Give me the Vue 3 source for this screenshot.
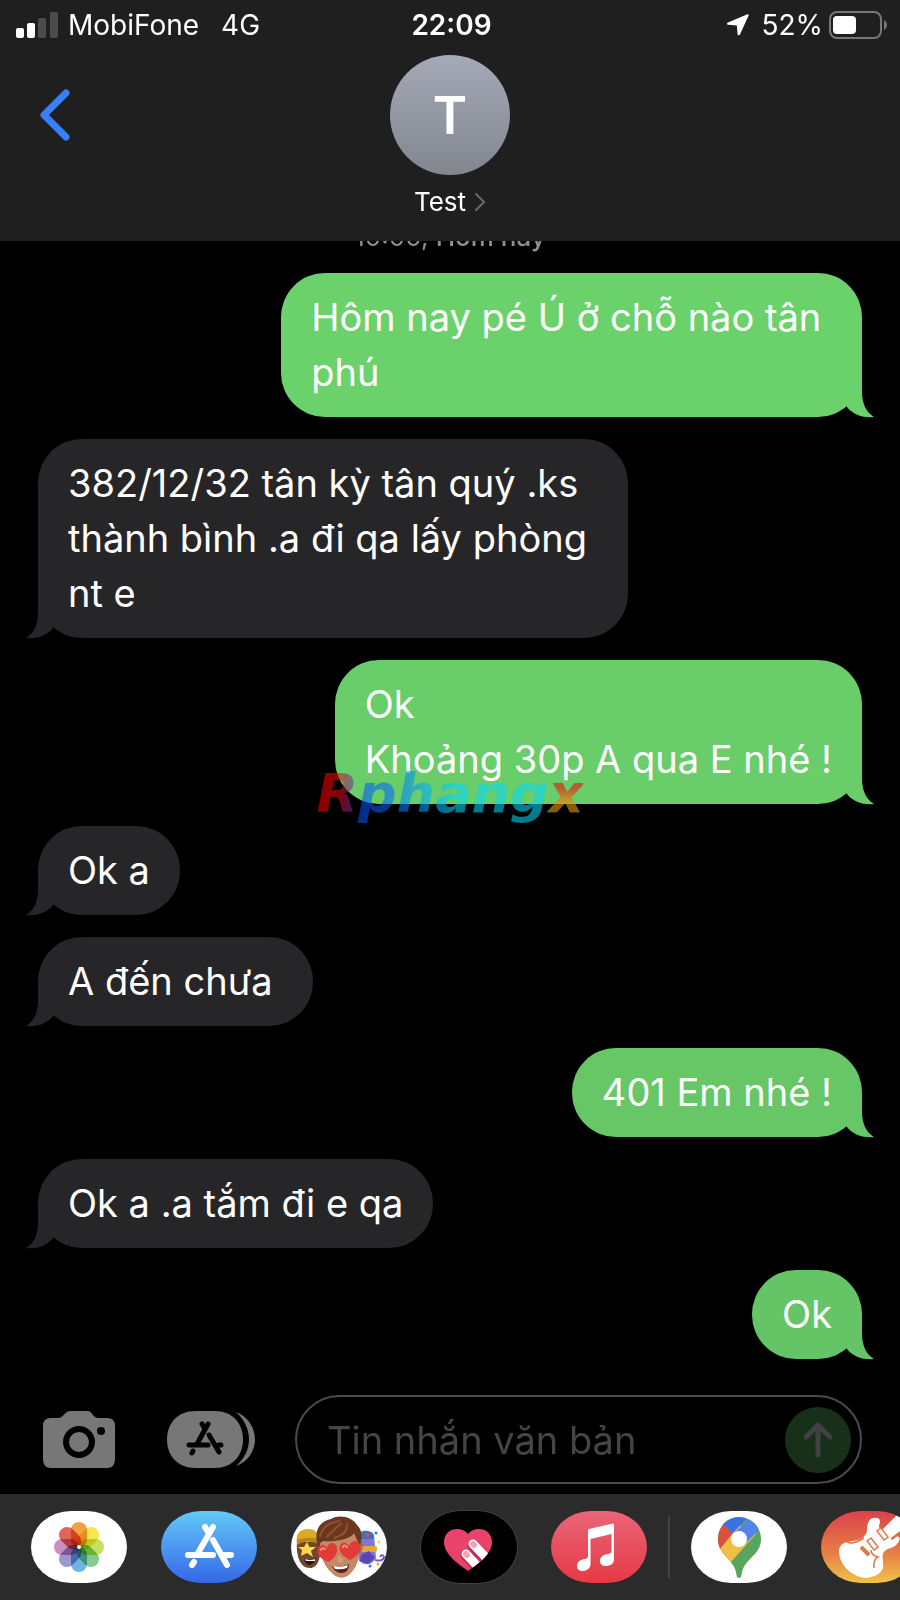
<template>
  <div class="phone">
    <header class="header">
      <div class="status">
        <div class="status-left">
          <svg class="signal" viewBox="0 0 42 26" aria-hidden="true">
            <rect x="0" y="16" width="8" height="10" rx="2" fill="#fff" />
            <rect x="11" y="11" width="8" height="15" rx="2" fill="#fff" />
            <rect x="22" y="6" width="8" height="20" rx="2" fill="#4c4c4c" />
            <rect x="34" y="0" width="8" height="26" rx="2" fill="#4c4c4c" />
          </svg>
          <span>MobiFone</span>
          <span class="network">4G</span>
        </div>
        <div class="clock">22:09</div>
        <div class="status-right">
          <svg class="location" viewBox="0 0 22 22" aria-hidden="true">
            <path d="M20.5.3 1 8.4C-.3 9-.2 10.600 1.200 10.700L9.800 11.500 10.600 20.200C10.700 21.500 12.400 21.700 13 20.500L21.600 1.600C22 .6 21.400 0 20.500.3Z" fill="#fff" />
          </svg>
          <span>52%</span>
          <svg class="battery" viewBox="0 0 58 28" aria-hidden="true">
            <rect x="1" y="1" width="51" height="26" rx="7" fill="none" stroke="#777" stroke-width="2" />
            <rect x="4" y="5" width="23" height="18" rx="4" fill="#fff" />
            <path d="M55 9C59 11 59 17 55 19Z" fill="#777" />
          </svg>
        </div>
      </div>
      <div class="contact">
        <button class="back" type="button" aria-label="Quay lại">
          <svg viewBox="0 0 30 52" aria-hidden="true">
            <path d="M26 4 4 26 26 48" fill="none" stroke="#367ff7" stroke-width="7" stroke-linecap="round" stroke-linejoin="round" />
          </svg>
        </button>
        <button class="person" type="button">
          <span class="avatar">T</span>
          <span class="person-name">
            Test
            <svg viewBox="0 0 12 20" aria-hidden="true">
              <path d="M2 2 10 10 2 18" fill="none" stroke="#6a6a6c" stroke-width="2" stroke-linecap="round" />
            </svg>
          </span>
        </button>
      </div>
    </header>

    <main class="messages">
      <p class="day">10:00, <b>Hôm nay</b></p>
      <div
        v-for="message in messages"
        :key="message.id"
        :class="['bubble', message.mine ? 'mine' : 'theirs']"
        :style="{ '--tone': message.tone }"
      >
        {{ message.text }}
        <svg class="tail" viewBox="-25 -45 40 46" aria-hidden="true">
          <path d="M0-45V-26C0-13 4-5 12 0C3 1-8-1-15-10L-25-25V-45Z" />
        </svg>
      </div>
    </main>

    <form class="composer" @submit.prevent="send">
      <button class="tool" type="button" aria-label="Máy ảnh">
        <svg class="camera" viewBox="0 0 72 57" aria-hidden="true">
          <path d="M8 7H15C21 7 21 0 28 0H44C50 0 49 7 56 7H64Q72 7 72 15V48Q72 57 64 57H8Q0 57 0 48V15Q0 7 8 7Z" fill="#777" />
          <circle cx="36" cy="31" r="13" fill="none" stroke="#000" stroke-width="6" />
          <circle cx="58" cy="20" r="4" fill="#000" />
        </svg>
      </button>
      <button class="tool" type="button" aria-label="Ứng dụng">
        <svg class="apps" viewBox="0 0 88 57" aria-hidden="true">
          <path d="M28 0H48C65 0 76 12 76 28.500S65 57 48 57H28C11 57 0 45 0 28.500S11 0 28 0Z" fill="#777" />
          <path d="M69 1C80 5 88 16 88 28.500S80 51 69 55C77 48 82 39 82 28.500S77 8 69 1Z" fill="#777" />
          <g fill="none" stroke="#000" stroke-width="5" stroke-linecap="round">
            <path d="M41 13 30 33M35 13 38 18M22 34H41M52 34H54M42 24 52 41M26 40 25 42" />
          </g>
        </svg>
      </button>
      <div class="field">
        <input v-model="draft" type="text" placeholder="Tin nhắn văn bản" aria-label="Tin nhắn văn bản">
        <button class="send" type="submit" aria-label="Gửi">
          <svg viewBox="0 0 66 66" aria-hidden="true">
            <path d="M33 48V18M21 30 33 18 45 30" fill="none" stroke="#414143" stroke-width="5" stroke-linecap="round" stroke-linejoin="round" />
          </svg>
        </button>
      </div>
    </form>

    <nav class="dock">
      <button class="app" type="button" aria-label="Ảnh">
        <svg viewBox="0 0 96 72" aria-hidden="true">
          <rect width="96" height="72" fill="#fff" />
          <g transform="translate(48 36)">
            <rect
              v-for="(color, index) in petals"
              :key="color"
              class="petal"
              x="-8"
              y="-25"
              width="16"
              height="25"
              rx="8"
              :fill="color"
              :transform="`rotate(${index * 45})`"
            />
            <circle r="2" fill="#fff" />
          </g>
        </svg>
      </button>
      <button class="app" type="button" aria-label="App Store">
        <svg viewBox="0 0 96 72" aria-hidden="true">
          <defs>
            <linearGradient id="store" x2="0" y2="1">
              <stop offset="0" stop-color="#63c9f6" />
              <stop offset="1" stop-color="#3467e8" />
            </linearGradient>
          </defs>
          <rect width="96" height="72" fill="url(#store)" />
          <path d="M52 16 37 42M44 16 47 21M27 44H52M63 44H70M52 29 66 54M33 51 31 54" fill="none" stroke="#fff" stroke-width="6" stroke-linecap="round" />
        </svg>
      </button>
      <button class="app" type="button" aria-label="Memoji">
        <svg viewBox="0 0 96 72" aria-hidden="true">
          <rect width="96" height="72" fill="#fff" />
          <path d="M6 31C5 43 8 57 19 57C27 57 30 47 30 31Z" fill="#70472e" />
          <path d="M6 33C4 23 9 18 17 18C25 18 28 22 28 31Q15 27 6 33Z" fill="#d9a92a" />
          <path d="M6 29Q16 25 28 28V33Q15 28 6 34Z" fill="#b98718" />
          <path d="M16 31 18.500 36 25 36 20 40 22 46 16 42 10 45 11 39 7 36 13 36Z" fill="#ffd84e" />
          <path d="M13 48Q19 50 25 47Q23 54 18 54Q14 53 13 48Z" fill="#2b1714" />
          <path d="M14 48Q19 50 24 48V50H15Z" fill="#fff" />
          <path d="M67 24H83L85 47Q78 58 68 50Z" fill="#8175d8" />
          <path d="M68 28C67 20 72 19 77 20C82 21 84 23 82 28Z" fill="#2f77c5" />
          <path d="M74 22H78V26H74Z" fill="#df4457" />
          <rect x="68" y="35" width="18" height="6" rx="2" fill="#e5a640" />
          <path d="M70 44 78 40 84 47 77 53 69 50Z" fill="#5847b4" />
          <path d="M84 49Q92 51 93 46Q91 42 89 46" fill="none" stroke="#7261cf" stroke-width="2" />
          <circle cx="85" cy="22" r="1.500" fill="#3874e8" />
          <circle cx="88" cy="31" r="1.500" fill="#f0dc3f" />
          <circle cx="79" cy="55" r="1.500" fill="#3874e8" />
          <circle cx="87" cy="53" r="1.500" fill="#f3a14a" />
          <path d="M29 24H69C71 41 67 55 60 62Q51 71 42 63C31 54 28 41 29 24Z" fill="#c08a68" />
          <path d="M69 30Q74 31 71 39Q70 44 67 43Z" fill="#a96b4c" />
          <path d="M27 36C22 19 29 10 40 8C49 3 61 6 66 14C72 19 71 29 69 34C66 31 66 27 63 23C57 29 42 31 32 30Q28 32 27 36Z" fill="#6b371e" />
          <path d="M29 26C31 16 39 11 49 10M35 26C40 23 43 17 51 12M43 27C54 24 57 19 56 12" fill="none" stroke="#8f5330" stroke-width="2" />
          <path d="M38 51C29 48 25 43 27 37C29 33 34 33 36 37C38 30 45 31 46 37C47 43 43 47 38 51Z" fill="#e43a35" />
          <path d="M59 49C52 45 47 41 49 35C51 30 56 31 58 35C61 28 68 29 69 35C70 41 65 46 59 49Z" fill="#e43a35" />
          <path d="M30 39Q31 36 34 38M52 36Q53 33 56 36" fill="none" stroke="#ff8e83" stroke-width="2" stroke-linecap="round" />
          <path d="M47 44Q44 51 49 52Q54 51 52 47" fill="#cf9876" />
          <path d="M41 55Q50 57 58 53Q58 62 50 62Q44 62 41 55Z" fill="#5b1f1d" />
          <path d="M42 55Q50 57 57 54L56 57Q50 59 44 58Z" fill="#fff" />
        </svg>
      </button>
      <button class="app app-dark" type="button" aria-label="Digital Touch">
        <svg viewBox="0 0 96 72" aria-hidden="true">
          <defs>
            <clipPath id="heart">
              <path d="M47 60C39 54 23 44 23 31C23 17 40 14 47 23C54 14 71 17 71 31C71 44 55 54 47 60Z" />
            </clipPath>
          </defs>
          <rect width="96" height="72" fill="#000" />
          <g clip-path="url(#heart)">
            <rect width="96" height="72" fill="#ea426b" />
            <path d="M52 35 72 56M45 44 65 65" stroke="#b72f51" stroke-width="11" stroke-linecap="round" />
            <path d="M52 33 72 54M45 43 65 64" stroke="#fff" stroke-width="9" stroke-linecap="round" />
            <path d="M52 33 53 34M45 43 46 44" stroke="#f4a2b6" stroke-width="6" stroke-linecap="round" />
          </g>
        </svg>
      </button>
      <button class="app" type="button" aria-label="Âm nhạc">
        <svg viewBox="0 0 96 72" aria-hidden="true">
          <defs>
            <linearGradient id="music" x2="0" y2="1">
              <stop offset="0" stop-color="#e96578" />
              <stop offset="1" stop-color="#e63a43" />
            </linearGradient>
          </defs>
          <rect width="96" height="72" fill="url(#music)" />
          <path d="M37 19Q37 18 38 18L62 12.500Q63 12.500 63 14V48C63 53 59 55 55 55C51 55 49 53 49 50C49 46 52 44 56 43C59 43 60.500 42 60.500 40V23L39.500 28V53C39.500 57 36 60 32 60C28 60 26 58 26 55C26 51 29 49 33 48C36 48 37 47 37 45Z" fill="#fff" />
        </svg>
      </button>
      <span class="divider"></span>
      <button class="app" type="button" aria-label="Google Maps">
        <svg viewBox="0 0 96 72" aria-hidden="true">
          <defs>
            <clipPath id="pin">
              <path d="M48 6C60 6 70 16 70 28C70 43 56 47 52 58C50 63 51 67 48 67S46 63 44 58C40 47 27 43 27 28C27 16 36 6 48 6Z" />
            </clipPath>
          </defs>
          <rect width="96" height="72" fill="#fff" />
          <g clip-path="url(#pin)">
            <rect x="24" width="50" height="72" fill="#58a55d" />
            <path d="M28 39 39 52 65 23 48 14Z" fill="#f1bd42" />
            <path d="M20 5 32 13 42 22 28 39 20 40Z" fill="#d85140" />
            <path d="M32 13 42 22 60 3 30 0Z" fill="#3873e0" />
            <path d="M62 4 42 23 53 34 74 13V0Z" fill="#5383ec" />
          </g>
          <circle cx="48" cy="28" r="8" fill="#fff" />
        </svg>
      </button>
      <button class="app" type="button" aria-label="GarageBand">
        <svg viewBox="0 0 96 72" aria-hidden="true">
          <defs>
            <linearGradient id="band" x2="0" y2="1">
              <stop offset="0" stop-color="#dc4149" />
              <stop offset="0.600" stop-color="#e68144" />
              <stop offset="1" stop-color="#f0c34b" />
            </linearGradient>
          </defs>
          <rect width="96" height="72" fill="url(#band)" />
          <path d="M18 40C18 33 24 31 32 30C40 29 46 25 46 19C46 11 49 7 53 7C59 6 60 10 58 15C58 18 60 19 62 18L76 4 92 10 70 27C70 30 72 29 75 26C79 24 80 29 76 33C73 37 68 37 65 39C59 43 63 49 62 57C60 63 53 66 45 67C32 66 18 55 18 40Z" fill="#fff" />
          <g fill="none" stroke="#e37745" stroke-width="1.500">
            <path d="M56 20 60 17 67 26 63 29ZM46 30 50 27 57 36 53 39Z" />
            <path d="M26 31Q32 34 43 27M53 57Q52 48 57 46Q50 44 50 39" />
            <path d="M40 36 48 44" stroke-width="4" />
          </g>
        </svg>
      </button>
    </nav>

    <div class="stamp">Rphang<span>x</span></div>
  </div>
</template>

<script setup>
import { ref } from 'vue'

const draft = ref('')

// \u00a0 keeps the trailing space that was typed in the message
const messages = ref([
  { id: 1, mine: true, tone: '#6bd26b', text: 'Hôm nay pé Ú ở chỗ nào tân\u00a0\nphú' },
  { id: 2, mine: false, tone: '#262628', text: '382/12/32 tân kỳ tân quý .ks\nthành bình .a đi qa lấy phòng\u00a0\nnt e' },
  { id: 3, mine: true, tone: '#69cd69', text: 'Ok\nKhoảng 30p A qua E nhé !' },
  { id: 4, mine: false, tone: '#262628', text: 'Ok a' },
  { id: 5, mine: false, tone: '#262628', text: 'A đến chưa\u00a0' },
  { id: 6, mine: true, tone: '#67c767', text: '401 Em nhé !' },
  { id: 7, mine: false, tone: '#262628', text: 'Ok a .a tắm đi e qa' },
  { id: 8, mine: true, tone: '#65c466', text: 'Ok' }
])

const petals = ['#f0a243', '#f4e64c', '#c6de62', '#87ca90', '#72b3e0', '#9c98cc', '#c990bd', '#e2655c']

const send = () => {
  if (!draft.value) {
    return
  }
  messages.value.push({ id: messages.value.length + 1, mine: true, tone: '#65c466', text: draft.value })
  draft.value = ''
}
</script>

<style>
body {
  margin: 0;
  background: #000;
}
</style>

<style scoped>
.phone {
  position: relative;
  display: flex;
  flex-direction: column;
  min-height: 100vh;
  overflow: hidden;
  background: #000;
  color: #fff;
  font-family: Inter, "Liberation Sans", sans-serif;
}
button {
  margin: 0;
  padding: 0;
  border: 0;
  background: none;
  color: inherit;
  font: inherit;
  cursor: pointer;
}
svg {
  display: block;
}

/* ----------------------- header */
.header {
  position: relative;
  z-index: 1;
  padding-bottom: 23px;
  background: #1f1f1f;
}
.status {
  display: grid;
  grid-template-columns: 1fr auto 1fr;
  align-items: center;
  height: 50px;
  padding: 0 13px 0 16px;
  font-size: 28px;
}
.status-left,
.status-right {
  display: flex;
  align-items: center;
}
.status-left {
  gap: 10px;
}
.status-right {
  justify-content: flex-end;
  gap: 6px;
}
.signal {
  width: 42px;
}
.network {
  margin-left: 12px;
}
.clock {
  font-weight: 600;
}
.location {
  width: 22px;
  margin-right: 6px;
}
.battery {
  width: 58px;
}
.contact {
  display: grid;
  grid-template-columns: 1fr auto 1fr;
  align-items: start;
  padding: 5px 40px 0;
}
.back {
  justify-self: start;
  padding: 34px 0;
}
.back svg {
  width: 30px;
}
.person {
  display: flex;
  flex-direction: column;
  align-items: center;
  gap: 11px;
}
.avatar {
  display: flex;
  align-items: center;
  justify-content: center;
  width: 120px;
  height: 120px;
  border-radius: 50%;
  background: linear-gradient(#a6a9b6, #82868f);
  font-size: 52px;
  font-weight: 600;
}
.person-name {
  display: flex;
  align-items: center;
  gap: 8px;
  font-size: 26px;
  line-height: 32px;
}
.person-name svg {
  width: 12px;
}

/* ----------------------- messages */
.messages {
  display: flex;
  flex: 1;
  flex-direction: column;
  gap: 22px;
  padding: 0 38px 36px;
}
.day {
  margin: -18px 0 0;
  color: #8e8e93;
  font-size: 26px;
  line-height: 28px;
  text-align: center;
}
.day b {
  font-weight: 500;
}
.bubble {
  position: relative;
  box-sizing: border-box;
  max-width: 80%;
  padding: 17px 30px;
  border-radius: 44px;
  background: var(--tone);
  font-size: 38px;
  line-height: 55px;
  white-space: pre-line;
}
.mine {
  align-self: flex-end;
}
.theirs {
  align-self: flex-start;
}
.tail {
  position: absolute;
  right: -15px;
  bottom: -1px;
  width: 40px;
  fill: var(--tone);
}
.theirs .tail {
  right: auto;
  left: -15px;
  transform: scaleX(-1);
}

/* ----------------------- composer */
.composer {
  display: flex;
  align-items: center;
  padding: 0 38px 10px 43px;
}
.tool {
  margin-right: 52px;
}
.tool + .tool {
  margin-right: 40px;
}
.camera {
  width: 72px;
}
.apps {
  width: 88px;
}
.field {
  display: flex;
  flex: 1;
  align-items: center;
  box-sizing: border-box;
  min-width: 0;
  height: 89px;
  padding: 0 9px 0 30px;
  border: 2px solid #4a4a4c;
  border-radius: 45px;
}
.field input {
  flex: 1;
  min-width: 0;
  padding: 0;
  border: 0;
  outline: none;
  background: none;
  color: #fff;
  font: inherit;
  font-size: 38px;
}
.field input::placeholder {
  color: #454547;
  opacity: 1;
}
.send {
  flex: none;
  width: 66px;
  height: 66px;
  border-radius: 50%;
  background: #18301a;
}

/* ----------------------- dock */
.dock {
  display: flex;
  gap: 34px;
  padding: 17px 0 17px 31px;
  overflow: hidden;
  background: #2b2b2b;
}
.app {
  flex: none;
  width: 96px;
  height: 72px;
  overflow: hidden;
  border-radius: 40px / 36px;
}
.app-dark {
  box-shadow: 0 0 0 1px #414141;
}
.petal {
  mix-blend-mode: multiply;
}
.divider {
  flex: none;
  width: 2px;
  margin: 5px -13px;
  background: #424242;
}

/* ----------------------- stamp over the conversation */
.stamp {
  position: absolute;
  top: 50%;
  left: 50%;
  z-index: 2;
  padding-bottom: 12px;
  transform: translate(-50%, -50%);
  background: linear-gradient(90deg, #f80000 8%, #0054ff 17%, #0062ff 26%, #00daff 52%);
  background-clip: text;
  color: transparent;
  font: italic bold 54px/64px "DejaVu Sans", sans-serif;
  opacity: 0.56;
  pointer-events: none;
}
.stamp span {
  background: linear-gradient(#f80000 40%, #ffa000 70%);
  background-clip: text;
}
</style>
